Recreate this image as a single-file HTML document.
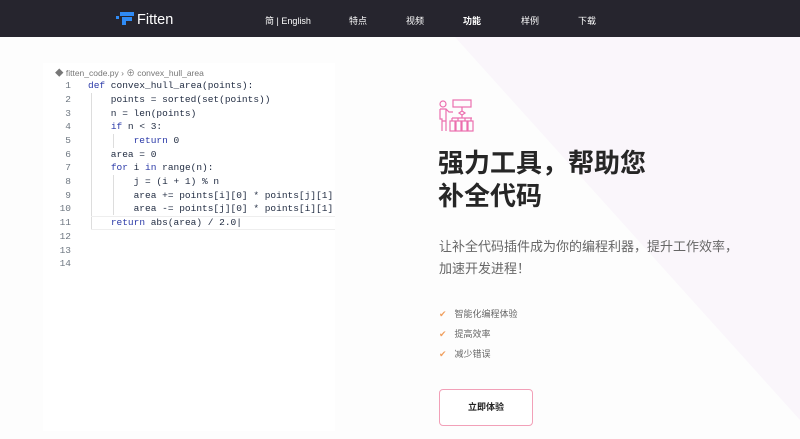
<!DOCTYPE html>
<html><head><meta charset="utf-8"><style>
*{margin:0;padding:0;box-sizing:border-box}
body{width:800px;height:439px;overflow:hidden;background:#fdfdfd;font-family:"Liberation Sans","Noto Sans CJK SC",sans-serif;position:relative}
.bg{position:absolute;left:0;top:0}
.nav{position:absolute;left:0;top:0;width:800px;height:37px;background:#26252e;color:#fff;font-size:9px}
.nav span{position:absolute;top:14px}
.logo{position:absolute;left:116px;top:10px}
.code{position:absolute;left:43px;top:63px;width:292px;height:368px;background:#fff}
.crumb{position:absolute;left:12px;top:4px;font-size:8.5px;color:#777}
.ln{position:absolute;left:0;width:28px;text-align:right;font:9.5px "Liberation Mono",monospace;color:#6e7781}
.cl{position:absolute;left:45px;font:9.5px "Liberation Mono",monospace;color:#1f2a40;white-space:pre}
.k{color:#2b3aa8}
.g{position:absolute;border-left:1px solid #ddd}
h1{position:absolute;left:438px;top:147px;font-size:26px;line-height:33px;font-weight:bold;color:#262626}
.p{position:absolute;left:439px;top:236px;font-size:13px;line-height:22px;color:#666}
.li{position:absolute;left:439px;font-size:9px;color:#666}
.li b{color:#f0a060;margin-right:8px;font-weight:normal}
.btn{position:absolute;left:439px;top:389px;width:94px;height:37px;border:1.5px solid #f2a0b8;border-radius:4px;background:#fff;font-size:9px;font-weight:bold;text-align:center;line-height:35px;color:#222}
</style></head><body>
<svg class="bg" width="800" height="439"><polygon points="455,37 800,37 800,420" fill="#faf6fb"/></svg>
<div class="nav">
<svg class="logo" width="70" height="16" viewBox="0 0 70 16"><rect x="0" y="6" width="3" height="3" fill="#2f8bf5"/><rect x="4" y="2" width="14" height="4" fill="#2f8bf5"/><rect x="6" y="7" width="10" height="4" fill="#2f8bf5"/><rect x="6" y="10" width="4" height="5" fill="#2f8bf5"/><text x="21" y="14" fill="#fff" font-size="14.5" font-family="Liberation Sans">Fitten</text></svg>
<span style="left:265px">简 | English</span>
<span style="left:349px">特点</span>
<span style="left:406px">视频</span>
<span style="left:463px;font-weight:bold">功能</span>
<span style="left:521px">样例</span>
<span style="left:578px">下载</span>
</div>
<div class="code">
<div class="crumb">◆ fitten_code.py › ⊕ convex_hull_area</div>
<div class="g" style="left:48px;top:30px;height:136px"></div>
<div class="g" style="left:70px;top:71px;height:14px"></div>
<div class="g" style="left:70px;top:112px;height:40px"></div>
<div style="position:absolute;left:48px;top:153px;width:244px;height:14px;border-top:1px solid #eee;border-bottom:1px solid #eee"></div>
<div class="ln" style="top:17px">1</div><div class="cl" style="top:17px"><span class="k">def</span> convex_hull_area(points):</div>
<div class="ln" style="top:31px">2</div><div class="cl" style="top:31px">    points = sorted(set(points))</div>
<div class="ln" style="top:45px">3</div><div class="cl" style="top:45px">    n = len(points)</div>
<div class="ln" style="top:58px">4</div><div class="cl" style="top:58px">    <span class="k">if</span> n &lt; 3:</div>
<div class="ln" style="top:72px">5</div><div class="cl" style="top:72px">        <span class="k">return</span> 0</div>
<div class="ln" style="top:86px">6</div><div class="cl" style="top:86px">    area = 0</div>
<div class="ln" style="top:99px">7</div><div class="cl" style="top:99px">    <span class="k">for</span> i <span class="k">in</span> range(n):</div>
<div class="ln" style="top:113px">8</div><div class="cl" style="top:113px">        j = (i + 1) % n</div>
<div class="ln" style="top:127px">9</div><div class="cl" style="top:127px">        area += points[i][0] * points[j][1]</div>
<div class="ln" style="top:140px">10</div><div class="cl" style="top:140px">        area -= points[j][0] * points[i][1]</div>
<div class="ln" style="top:154px">11</div><div class="cl" style="top:154px">    <span class="k">return</span> abs(area) / 2.0|</div>
<div class="ln" style="top:168px">12</div>
<div class="ln" style="top:182px">13</div>
<div class="ln" style="top:195px">14</div>
</div>
<svg style="position:absolute;left:438px;top:99px" width="36" height="34" viewBox="0 0 36 34" fill="none" stroke="#ec6fae" stroke-width="1.2"><circle cx="5" cy="5" r="3"/><path d="M2 10h6l3 3h4M2 10v10h2v12M8 10v22M4 22h4"/><rect x="15" y="1" width="18" height="7"/><path d="M24 8v4M21 14l3-2 3 2-3 2zM24 16v3M14 19h20M14 19v3M20 19v3M27 19v3M33 19v3"/><rect x="12" y="22" width="5" height="10"/><rect x="18" y="22" width="5" height="10"/><rect x="24" y="22" width="5" height="10"/><rect x="30" y="22" width="5" height="10"/></svg>
<h1>强力工具，帮助您<br>补全代码</h1>
<div class="p">让补全代码插件成为你的编程利器，提升工作效率，<br>加速开发进程！</div>
<div class="li" style="top:307px"><b>✔</b>智能化编程体验</div>
<div class="li" style="top:327px"><b>✔</b>提高效率</div>
<div class="li" style="top:347px"><b>✔</b>减少错误</div>
<div class="btn">立即体验</div>
</body></html>
